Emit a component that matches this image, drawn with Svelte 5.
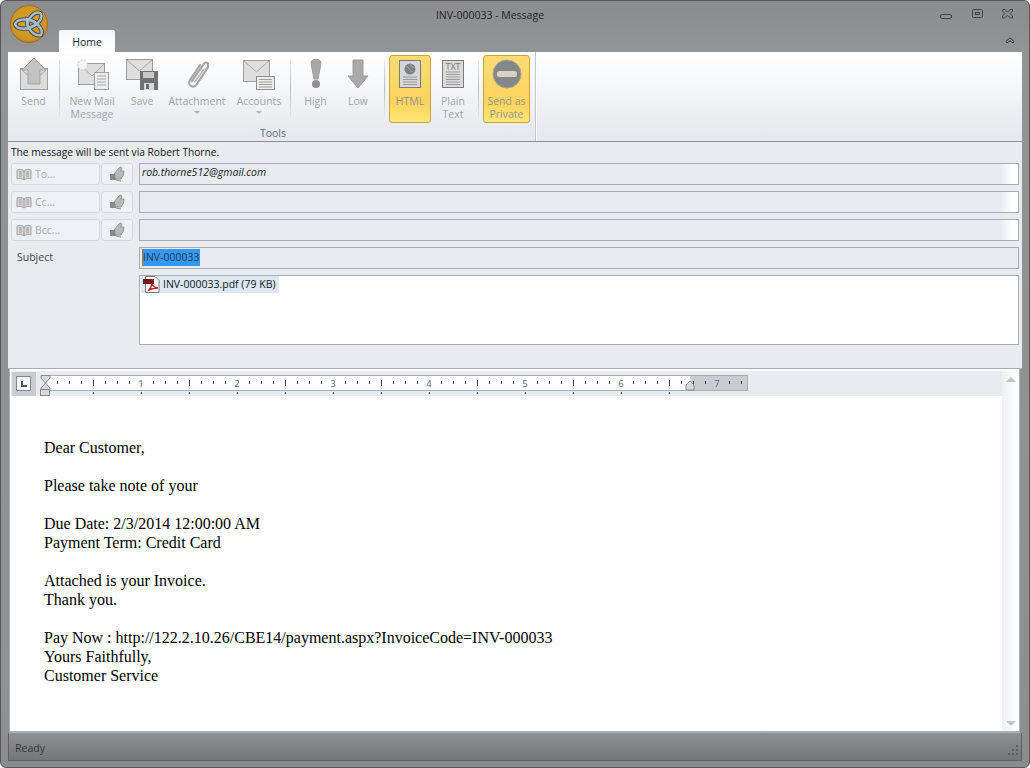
<script>
  const rows = ['To...', 'Cc...', 'Bcc...'];
  const values = ['rob.thorne512@gmail.com', '', ''];
  const inches = [1, 2, 3, 4, 5, 6, 7];
  const ticks = [];
  for (let i = 1; i < 59; i++) {
    if (i % 8 !== 0) ticks.push({ x: 12 * i, long: i % 4 === 0 });
  }
  const lower = [];
  for (let i = 1; i < 14; i++) lower.push(48 * i);
  const lines = [
    'Dear Customer,', '', 'Please take note of your', '',
    'Due Date: 2/3/2014 12:00:00 AM', 'Payment Term: Credit Card', '',
    'Attached is your Invoice.', 'Thank you.', '',
    'Pay Now : http://122.2.10.26/CBE14/payment.aspx?InvoiceCode=INV-000033',
    'Yours Faithfully,', 'Customer Service'
  ];
  const lobes = [
    'M19 24C17 14 26 7 31 9C35 12 30 22 19 24Z',
    'M26 18C17 14 8 15 6 20C7 25 17 27 26 21Z',
    'M18 15C17 25 26 33 32 31C35 26 28 17 18 15Z'
  ];
</script>

<div class="window">
  <div class="logo">
    <svg width="40" height="40" viewBox="0 0 40 40">
      <defs>
        <radialGradient id="lg" cx="0.5" cy="0.45" r="0.6">
          <stop offset="0" stop-color="#d2a526" />
          <stop offset="0.8" stop-color="#cc9420" />
          <stop offset="1" stop-color="#b5701c" />
        </radialGradient>
      </defs>
      <circle cx="20" cy="20" r="18.500" fill="url(#lg)" stroke="#a8691d" />
      {#each lobes as d}
        <path {d} fill="none" stroke="#3f4a55" stroke-width="4.200" />
      {/each}
      {#each lobes as d}
        <path {d} fill="none" stroke="#a7bccf" stroke-width="2.400" />
      {/each}
    </svg>
  </div>

  <header class="titlebar">
    <div class="title">INV-000033 - Message</div>
    <div class="controls">
      <svg width="12" height="6" viewBox="0 0 12 6" class="min"><rect x="0.500" y="0.500" width="11" height="4" rx="1.500" fill="none" stroke="#3f4246" /></svg>
      <svg width="11" height="10" viewBox="0 0 11 10" class="max"><rect x="0.500" y="0.500" width="10" height="8" rx="1" fill="none" stroke="#3f4246" /><rect x="3.500" y="3.500" width="4" height="2" fill="none" stroke="#3f4246" /></svg>
      <svg width="11" height="10" viewBox="0 0 11 10" class="close"><path d="M1 .5H3L5.500 3 8 .5H10.500V2L8 4.500 10.500 7V9H8.500L5.500 6.500 2.500 9H.5V7L3 4.500 .5 2Z" fill="none" stroke="#3f4246" /></svg>
    </div>
  </header>

  <div class="tabrow">
    <div class="tab">Home</div>
    <svg class="collapse" width="10" height="7" viewBox="0 0 10 7"><path d="M1 4.500L5 .8 9 4.500 8 6 5 3.800 2 6Z" fill="none" stroke="#33363a" /></svg>
  </div>

  <section class="ribbon">
    <div class="group">
      <div class="tools">
        <div class="tool send">
          <svg class="ic" viewBox="0 0 36 36"><rect x="4.500" y="11.500" width="27" height="21" fill="#dcdcdc" stroke="#a0a0a0" /><path d="M5 12L18 24 31 12" fill="none" stroke="#a8a8a8" /><path d="M18 1L30 13H24V27H12V13H6Z" fill="#c2c2c2" stroke="#a4a4a4" /></svg>
          <span>Send</span>
        </div>
        <div class="sep s1"></div>
        <div class="tool newmail">
          <svg class="ic" viewBox="0 0 36 36"><rect x="4.500" y="6.500" width="26" height="21" fill="#dedede" stroke="#9d9d9d" /><path d="M5 7L18 19 30 7" fill="none" stroke="#a8a8a8" /><rect x="20.500" y="15.500" width="14" height="17" fill="#ececec" stroke="#a0a0a0" /><path d="M23 19H32M23 22H32M23 25H32M23 28H32" stroke="#aaa" /><circle cx="8.500" cy="8" r="5" fill="#f4f4f4" stroke="#c8c8c8" stroke-dasharray="2 1.500" /></svg>
          <span>New Mail<br />Message</span>
        </div>
        <div class="tool save">
          <svg class="ic" viewBox="0 0 36 36"><rect x="2.500" y="2.500" width="26" height="20" fill="#dedede" stroke="#9d9d9d" /><path d="M3 3L15.500 14 28 3" fill="none" stroke="#a8a8a8" /><path d="M16 14H34V33H16Z" fill="#6f7173" /><rect x="19" y="15" width="11" height="6" fill="#c9c9c9" /><rect x="20" y="26" width="10" height="7" fill="#d7d7d7" /><rect x="22" y="27" width="3" height="5" fill="#6f7173" /></svg>
          <span>Save</span>
        </div>
        <div class="tool attach">
          <svg class="ic" viewBox="0 0 36 36"><path d="M13 24L24 8C26 4 30 5 29 10L18 27C15 32 8 29 11 23L21 8" fill="none" stroke="#a6a6a6" stroke-width="2.200" stroke-linecap="round" /><path d="M16 25L25 12" fill="none" stroke="#bcbcbc" stroke-width="1.600" stroke-linecap="round" /></svg>
          <span>Attachment</span>
          <i class="caret"></i>
        </div>
        <div class="tool accounts">
          <svg class="ic" viewBox="0 0 36 36"><rect x="2.500" y="3.500" width="26" height="21" fill="#dedede" stroke="#9d9d9d" /><path d="M3 4L15.500 15 28 4" fill="none" stroke="#a8a8a8" /><rect x="15.500" y="19.500" width="18" height="13" fill="#ececec" stroke="#8f8f8f" /><path d="M18 22.500H31M18 25H31M18 27.500H31M18 30H31" stroke="#9d9d9d" /></svg>
          <span>Accounts</span>
          <i class="caret"></i>
        </div>
        <div class="sep s2"></div>
        <div class="tool high">
          <svg class="ic" viewBox="0 0 36 36"><path d="M13 6C13 1 23 1 23 6L20 22H16Z" fill="#a8a8a8" stroke="#9a9a9a" /><circle cx="18" cy="27" r="4" fill="#8f8f8f" /></svg>
          <span>High</span>
        </div>
        <div class="tool low">
          <svg class="ic" viewBox="0 0 36 36"><path d="M13 3H23V19H28L18 31 8 19H13Z" fill="#a9a9a9" stroke="#9c9c9c" /></svg>
          <span>Low</span>
        </div>
        <div class="sep s3"></div>
        <div class="tool html on">
          <svg class="ic" viewBox="0 0 36 36"><rect x="7.500" y="3.500" width="21" height="27" fill="#d6d6d6" stroke="#7c7c7c" /><circle cx="18" cy="12" r="5.500" fill="#7c8084" /><path d="M14 9C17 9 17 14 21 15M19 7C18 10 22 10 23 11" fill="none" stroke="#a9adb0" /><path d="M11 20H25M11 22.500H25M11 25H25M11 27.500H25" stroke="#9a9a9a" /></svg>
          <span>HTML</span>
        </div>
        <div class="tool plain">
          <svg class="ic" viewBox="0 0 36 36"><rect x="7.500" y="3.500" width="21" height="27" fill="#dadada" stroke="#7c7c7c" /><text x="18" y="12.500" class="txt">TXT</text><path d="M11 15H25M11 17.500H25M11 20H25M11 22.500H25M11 25H25M11 27.500H25" stroke="#9a9a9a" /></svg>
          <span>Plain<br />Text</span>
        </div>
        <div class="sep s4"></div>
        <div class="tool private on">
          <svg class="ic" viewBox="0 0 36 36"><circle cx="18" cy="17" r="14" fill="#858789" /><circle cx="18" cy="17" r="14" fill="none" stroke="#a5a59c" /><rect x="8" y="14" width="20" height="6" rx="2.500" fill="#d6d2c4" /></svg>
          <span>Send as<br />Private</span>
        </div>
      </div>
      <div class="grouplabel">Tools</div>
    </div>
  </section>

  <section class="form">
    <div class="via">The message will be sent via Robert Thorne.</div>
    {#each rows as r, i}
      <div class="row">
        <div class="lbtn">
          <svg width="16" height="13" viewBox="0 0 16 13"><path d="M8 3C6 1 3 1 1 2V11C3 10 6 10 8 12 10 10 13 10 15 11V2C13 1 10 1 8 3Z" fill="#d4d4d4" stroke="#a3a3a3" /><path d="M8 3V12M3 4H6M3 6H6M3 8H6M10 4H13M10 6H13M10 8H13" stroke="#a3a3a3" /></svg>
          <span>{r}</span>
        </div>
        <div class="ibtn">
          <svg width="17" height="16" viewBox="0 0 17 16"><path d="M5 8L10 2 12 1 13 3 11.500 5H15L14.500 9 12 13H6Z" fill="#b9b9b9" stroke="#969696" /><path d="M1 8H6L7 14H1Z" fill="#8b8b8b" /><path d="M7 14L12 15" stroke="#8b8b8b" /></svg>
        </div>
        <div class="field fade">{values[i]}</div>
      </div>
    {/each}
    <div class="row subject">
      <div class="sublabel">Subject</div>
      <div class="field plainf"><span class="sel">INV-000033</span></div>
    </div>
    <div class="attachrow">
      <div class="attbox">
        <div class="file">
          <svg width="17" height="17" viewBox="0 0 17 17"><path d="M2.500 .5H12L16 4.500V16.500H2.500Z" fill="#fff" stroke="#777" /><rect x="0" y="3" width="11" height="5" fill="#7a1416" /><path d="M5 15C8 12 9 8 8.500 6 8 8 11 12 15 12 11 12 7 13 5 15Z" fill="none" stroke="#c8181c" stroke-width="1.300" /></svg>
          <span>INV-000033.pdf (79 KB)</span>
        </div>
      </div>
    </div>
  </section>

  <section class="editor">
    <div class="docarea">
      <div class="rulerbar">
        <div class="corner"><div class="cornerin"><svg width="8" height="8" viewBox="0 0 8 8"><path d="M1 1V7H7V5H3V1Z" fill="#555" /></svg></div></div>
        <div class="ruler">
          <svg width="703" height="21" viewBox="0 0 703 21">
            <rect x="0.500" y="0.500" width="702" height="15" fill="#c9ccd1" stroke="#a9adb4" />
            <rect x="1" y="1" width="644" height="14" fill="#fff" />
            {#each ticks as t}
              <line x1={t.x + 0.5} x2={t.x + 0.5} y1={t.long ? 5 : 6} y2={t.long ? 11 : 9} stroke="#3c3c3c" />
            {/each}
            {#each lower as x}
              <line x1={x + 0.5} x2={x + 0.5} y1="17" y2="19" stroke="#444" />
            {/each}
            {#each inches as n}
              <text x={n * 96} y="11.500" class="num">{n}</text>
            {/each}
            <path d="M641 15V10L645 6 649 10V15Z" fill="#d9d9d9" stroke="#8a8a8a" />
            <path d="M-4 .5H5V3L.5 8 5 13V15H-4V13L.5 8-4 3Z" fill="#d9d9d9" stroke="#8a8a8a" />
            <rect x="-4.500" y="14.500" width="9" height="6" fill="#d9d9d9" stroke="#8a8a8a" />
          </svg>
        </div>
      </div>
      <div class="doc">
        {#each lines as l}
          <div class="line">{l}</div>
        {/each}
      </div>
    </div>
    <div class="scroll">
      <i class="up"></i>
      <i class="down"></i>
    </div>
  </section>

  <footer class="status">
    <span>Ready</span>
    <svg class="grip" width="11" height="11" viewBox="0 0 11 11">
      <path d="M8 0h2v2H8zM4 4h2v2H4zM8 4h2v2H8zM0 8h2v2H0zM4 8h2v2H4zM8 8h2v2H8z" fill="#5c5e60" />
    </svg>
  </footer>
</div>

<style>
  :global(body) { background: #f2f2f2; }
  .window {
    box-sizing: border-box;
    position: relative;
    width: 1030px;
    height: 768px;
    display: flex;
    flex-direction: column;
    padding: 0 7px 6px 7px;
    background: linear-gradient(#8b8c8e, #939496 50px, #8f9092 700px, #8a8b8d);
    border: 1px solid #56595c;
    border-radius: 6px;
    font: 10.500px/13px "Open Sans", "Noto Sans", sans-serif;
    color: #1d1f22;
    overflow: hidden;
  }
  .logo { position: absolute; left: 8px; top: 3px; width: 40px; height: 40px; }
  .titlebar { height: 29px; display: grid; grid-template-columns: 1fr auto; position: relative; }
  .title { text-align: center; line-height: 28px; color: #23262a; padding-left: 32px; }
  .controls { display: flex; align-items: flex-start; padding-right: 7px; }
  .min { margin-top: 13px; }
  .max { margin: 8px 0 0 20px; }
  .close { margin: 8px 2px 0 19px; }
  .tabrow { height: 22px; display: flex; justify-content: space-between; align-items: flex-start; padding-left: 51px; flex: none; }
  .tab {
    width: 56px; height: 22px; text-align: center; line-height: 24px;
    background: linear-gradient(#f4f6f9, #fff); border-radius: 2px 2px 0 0; color: #23262e;
  }
  .collapse { margin: 7px 7px 0 0; }
  .ribbon {
    flex: none; height: 90px;
    background: linear-gradient(#fff, #f7f8fa 30px, #e6e9ee 80px);
    border-bottom: 1px solid #8e9094;
    box-sizing: border-box;
  }
  .group {
    width: 528px; height: 89px; position: relative; box-sizing: border-box;
    padding: 3px 0 0 3px; border-right: 1px solid #c3c6cb; box-shadow: 1px 0 0 #fff;
  }
  .tools { display: flex; height: 68px; align-items: stretch; }
  .tool {
    box-sizing: border-box; display: flex; flex-direction: column; align-items: center;
    text-align: center; color: #a2a6ad; padding-top: 2px; line-height: 13px; white-space: nowrap;
  }
  .tool span { margin-top: 2px; }
  .ic { width: 36px; height: 36px; display: block; flex: none; }
  .caret { width: 0; height: 0; border: 3px solid transparent; border-top: 3px solid #b0b3b8; margin-top: 3px; }
  .sep { width: 1px; height: 58px; margin-top: 5px; background: linear-gradient(#e8eaee, #b9bcc2 50%, #e8eaee); flex: none; }
  .send { width: 45px; }
  .s1 { margin-left: 3px; }
  .newmail { width: 52px; margin-left: 6px; }
  .save { width: 40px; margin-left: 4px; }
  .attach { width: 62px; margin-left: 4px; }
  .accounts { width: 50px; margin-left: 6px; }
  .s2 { margin-left: 6px; }
  .high { width: 35px; margin-left: 7px; }
  .low { width: 36px; margin-left: 7px; }
  .s3 { margin-left: 8px; }
  .html { width: 42px; margin-left: 4px; }
  .plain { width: 40px; margin-left: 2px; }
  .s4 { margin-left: 5px; }
  .private { width: 47px; margin-left: 4px; }
  .on {
    background: linear-gradient(#fedc72, #fed35f 70%, #ffe777);
    border: 1px solid #c9a24a; border-radius: 3px; padding-top: 1px; color: #969690;
  }
  .txt { font: 9px "Open Sans", sans-serif; text-anchor: middle; fill: #7a7a7a; }
  .grouplabel { text-align: center; color: #5e6a7a; margin-top: 3px; line-height: 14px; }

  .form { flex: none; background: #e8ebf0; height: 227px; box-sizing: border-box; padding: 3px 3px 0 3px; border-bottom: 1px solid #a8acb4; }
  .via { height: 14px; line-height: 14px; margin-bottom: 4px; color: #15171a; font-size: 10.200px; }
  .row { display: flex; height: 22px; margin-bottom: 6px; }
  .lbtn {
    box-sizing: border-box; width: 89px; height: 22px; display: flex; align-items: center; gap: 3px; padding-left: 4px;
    background: #edf0f4; border: 1px solid #d5d8de; border-radius: 3px; color: #a9adb3;
  }
  .ibtn {
    box-sizing: border-box; width: 32px; height: 22px; margin-left: 1px; display: flex; align-items: center; justify-content: center;
    background: #edf0f4; border: 1px solid #d5d8de; border-radius: 3px;
  }
  .field {
    box-sizing: border-box; flex: 1; margin-left: 6px; height: 22px; border: 1px solid #a8acb6; padding: 1px 2px 0;
    line-height: 15px; color: #191b1f; font-style: italic;
  }
  .fade { background: linear-gradient(to right, transparent calc(100% - 18px), #fff calc(100% - 5px)); }
  .subject { margin-bottom: 6px; }
  .sublabel { box-sizing: border-box; width: 122px; padding-left: 6px; line-height: 20px; color: #3f4650; }
  .subject .field { font-style: normal; padding: 1px 2px; }
  .sel { background: #3399ff; color: #2a3a55; display: inline-block; border-left: 1px solid #d2660a; line-height: 17px; }
  .attachrow { padding-left: 128px; }
  .attbox { box-sizing: border-box; height: 70px; background: #fff; border: 1px solid #a8acb6; padding: 0 0 0 1px; }
  .file { display: inline-flex; align-items: center; gap: 3px; height: 17px; background: #dce9f5; padding: 0 3px 0 2px; color: #15171a; }
  .file svg { flex: none; }

  .editor {
    flex: 1; min-height: 0; display: flex; margin: 0 2px 0 1px;
    border: 1px solid #a8b0bb; border-top: 0; background: #fff; box-sizing: border-box; padding: 2px 0 0 1px;
    border-bottom-width: 2px;
  }
  .docarea { flex: 1; min-width: 0; }
  .rulerbar { height: 25px; background: #e8ebf0; display: flex; padding-left: 1px; }
  .corner { box-sizing: border-box; width: 24px; height: 24px; background: #c9ccd1; padding: 4px; margin-top: 1px; }
  .cornerin { box-sizing: border-box; width: 15px; height: 15px; background: #f6f7f8; border: 1px solid #83868b; display: flex; align-items: center; justify-content: center; }
  .ruler { margin: 4px 0 0 9px; }
  .ruler svg { display: block; overflow: visible; }
  .num { font: 9.500px "Open Sans", sans-serif; text-anchor: middle; fill: #56677f; }
  .doc { padding: 42px 0 0 33px; font: 16px/19px "Liberation Serif", "Times New Roman", serif; color: #000; }
  .line { height: 19px; white-space: nowrap; }
  .scroll {
    width: 17px; flex: none; background: linear-gradient(to right, #eef0f3, #fff);
    display: flex; flex-direction: column; justify-content: space-between; align-items: center; padding: 6px 0 5px;
  }
  .up { width: 0; height: 0; border: 5px solid transparent; border-top: 0; border-bottom: 5px solid #c2c4c8; }
  .down { width: 0; height: 0; border: 5px solid transparent; border-bottom: 0; border-top: 5px solid #c2c4c8; }

  .status {
    flex: none; height: 28px; box-sizing: border-box;
    display: flex; align-items: center; justify-content: space-between; padding: 3px 2px 0 6px;
    background: linear-gradient(#8f9092, #75767a);
    border: 1px solid #5f6164; border-top: 0;
    color: #33383e;
  }
  .grip { margin-top: 4px; }
</style>
